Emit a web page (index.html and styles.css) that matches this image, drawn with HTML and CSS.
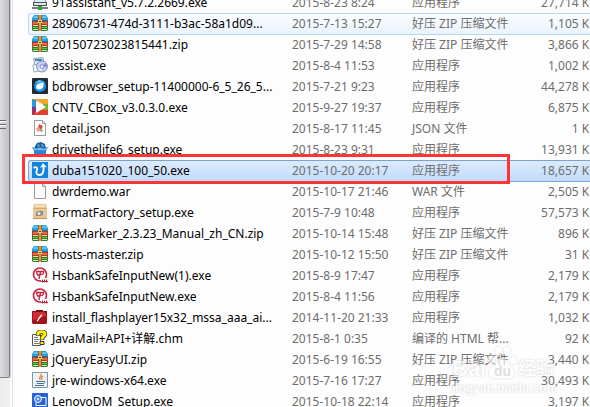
FILE: index.html
```
<!DOCTYPE html>
<html lang="zh-CN">
<head>
    <meta charset="UTF-8">
    <meta name="viewport" content="width=device-width, initial-scale=1.0">
    <title>Downloads</title>
    <link rel="stylesheet" href="styles.css">
</head>
<body>
    <!-- Shared icons -->
    <svg class="sprite" aria-hidden="true">
        <defs>
            <linearGradient id="cntvGrad" x2="0" y2="1"><stop offset="0" stop-color="#2374c9"/><stop offset=".5" stop-color="#6d3794"/><stop offset="1" stop-color="#d5204e"/></linearGradient>
        </defs>
        <symbol id="zip" viewBox="0 0 16 16">
            <path fill="#2aa3dc" d="M2 0h12l2 3v3H0V3z"/>
            <path fill="#5cc6ee" d="M2 1h12l1 2H1z"/>
            <path fill="#1673ab" d="M0 5h16v1H0z"/>
            <path fill="#b53a20" d="M0 6h16v5H0z"/>
            <path fill="#e56b47" d="M1 7h14v2H1z"/>
            <path fill="#f3d6a4" d="M1 10h14v1H1z"/>
            <path fill="#2c7f2b" d="M0 11h16v4l-1 1H1l-1-1z"/>
            <path fill="#6abe45" d="M1 12h14v1H1z"/>
            <path fill="#e5e3b5" d="M1 14h14v1H1z"/>
            <path fill="#8f5d28" d="M6 0h4v16H6z"/>
            <path fill="#d59a46" d="M7 0h2v16H7z"/>
            <path fill="#f0cf73" d="M6 5h4v3H6z"/>
            <path fill="#5a3210" d="M7 6h2v1H7z"/>
        </symbol>
        <symbol id="bank" viewBox="0 0 16 16">
            <circle cx="8" cy="7.500" r="6.500" fill="#fff" stroke="#c4213d" stroke-width="1.600"/>
            <path fill="none" stroke="#c4213d" stroke-width="1.300" d="M4 4.500h7.500c.5 2-1 3-3 3M8.500 4.500L7 12M4.500 5l1 3h2"/>
            <path fill="#fff" d="M9 11h7v5H9z"/>
            <path fill="none" stroke="#c4213d" d="M9 14.500h7M10.500 12.500v3M12.500 12.500v3M14.500 12.500v3"/>
        </symbol>
    </svg>

    <div class="window">
        <div class="nav-scroll">
            <div class="thumb"><span class="grip"></span></div>
        </div>

        <main class="list">
            <table class="files" aria-label="文件列表">
                <colgroup>
                    <col class="col-name">
                    <col class="col-date">
                    <col class="col-type">
                    <col class="col-size">
                </colgroup>
                <tbody>
                    <tr>
                        <td class="name"><svg class="icon" viewBox="0 0 16 16"><path fill="#9ba4ad" d="M2 1h12v8H2z"/><path fill="#d9eff8" d="M3 2h10v6H3z"/><path fill="#4a5158" d="M1 8h14v4H1z"/><path fill="#e2e5e8" d="M2 9h12v2H2z"/><path fill="#777f86" d="M0 13h16v2H0z"/><path fill="#28a63e" d="M6 12h4v4H6z"/></svg>91assistant_v5.7.2.2669.exe</td>
                        <td>2015-8-23 8:24</td><td>应用程序</td><td class="size">27,714 KB</td>
                    </tr>
                    <tr class="hover">
                        <td class="name"><svg class="icon"><use href="#zip"/></svg>28906731-474d-3111-b3ac-58a1d09...</td>
                        <td>2015-7-13 15:27</td><td>好压 ZIP 压缩文件</td><td class="size">1,105 KB</td>
                    </tr>
                    <tr>
                        <td class="name"><svg class="icon"><use href="#zip"/></svg>20150723023815441.zip</td>
                        <td>2015-7-29 14:58</td><td>好压 ZIP 压缩文件</td><td class="size">3,866 KB</td>
                    </tr>
                    <tr>
                        <td class="name"><svg class="icon" viewBox="0 0 16 16"><path fill="#d7e3ee" stroke="#93a7bb" d="M1.500 1.500L11 .5l2 11-9 2z"/><path fill="#3c7bc8" d="M3 2h7v2H3z"/><path fill="#4ba459" d="M4 2h2v2H4z"/><path fill="#fff" stroke="#97a6b5" d="M1 8l6-1v7l-5 1z"/><circle cx="10" cy="9.500" r="5.500" fill="#c5cdf2" stroke="#858fc4"/><path fill="#8d7be0" d="M10 9l4-3 1 4z"/><path fill="#e5f4ff" d="M10 9L6 13l4 1z"/><circle cx="10" cy="9.500" r="1.800" fill="#fff" stroke="#8188ab"/></svg>assist.exe</td>
                        <td>2015-8-4 11:53</td><td>应用程序</td><td class="size">1,002 KB</td>
                    </tr>
                    <tr>
                        <td class="name"><svg class="icon" viewBox="0 0 16 16"><rect width="16" height="16" rx="1" fill="#252b34"/><circle cx="8" cy="8" r="6" fill="#1792ed"/><path fill="#6ccaff" d="M3 5l4-3 6 3-5-1z"/><path fill="#fff" d="M11.500 4.500c.5 4-1 7-4 7s-4-2-3-4 3-2.500 7-3z"/></svg>bdbrowser_setup-11400000-6_5_26_5...</td>
                        <td>2015-7-21 9:23</td><td>应用程序</td><td class="size">44,278 KB</td>
                    </tr>
                    <tr>
                        <td class="name"><svg class="icon" viewBox="0 0 16 16"><path fill="url(#cntvGrad)" d="M0 0h5v16H0z"/><path fill="#f5a623" d="M0 0h16v8L5 2z"/><path fill="#2d9bd6" d="M0 0l5 3v5H0z"/><path fill="#e43d2e" d="M16 8v8H0l5-4z"/><path fill="#77b82a" d="M11 5h5v6h-5z"/><path fill="#fff" d="M4 2l10 6-10 6z"/></svg>CNTV_CBox_v3.0.3.0.exe</td>
                        <td>2015-9-27 19:37</td><td>应用程序</td><td class="size">6,875 KB</td>
                    </tr>
                    <tr>
                        <td class="name"><svg class="icon" viewBox="0 0 16 16"><path fill="#fff" stroke="#9b9b9b" d="M2.500.5h8l3 3v12h-11z"/><path fill="#e4e4e4" stroke="#9b9b9b" d="M10.500.5v3h3"/><path fill="#d7493b" d="M7 4l4 2-2 4-3-2z"/><path fill="#eba392" d="M4 8l3-1 2 4-4 1z"/><path fill="#79a961" d="M9 9l2 1-1 2-2-1z"/></svg>detail.json</td>
                        <td>2015-8-17 11:45</td><td>JSON 文件</td><td class="size">1 KB</td>
                    </tr>
                    <tr>
                        <td class="name"><svg class="icon" viewBox="0 0 16 16"><path fill="#1f5c9c" d="M3 8V5l2-3 4-1 4 2 1 5z"/><path fill="#5f9fd6" d="M5 5l1-2 2 1-1 2zM9 3l2 0 1 3h-2z"/><path fill="#2f86d4" d="M0 6l4 1 4-1 4 1 4-1-2 4v5H2v-5z"/><path fill="#7fc0f3" d="M1 7l3 1 4-1 4 1 3-1-1 2H2z"/></svg>drivethelife6_setup.exe</td>
                        <td>2015-8-23 9:31</td><td>应用程序</td><td class="size">13,931 KB</td>
                    </tr>
                    <tr class="selected">
                        <td class="name"><svg class="icon" viewBox="0 0 16 16"><path fill="#1185dc" d="M0 0h16v16H0z"/><path fill="none" stroke="#fff" stroke-width="1.800" d="M1.500 6C3.500 4.500 6 5 5 7.500S4 13 7.500 13 12 9 11.500 4"/><path fill="#fff" d="M11 1l4 4.500-3.500-1L8 6z"/></svg>duba151020_100_50.exe<span class="marker"></span></td>
                        <td>2015-10-20 20:17</td><td>应用程序</td><td class="size">18,657 KB</td>
                    </tr>
                    <tr>
                        <td class="name"><svg class="icon" viewBox="0 0 16 16"><path fill="#fafafa" stroke="#9b9b9b" d="M2.500.5h8l3 3v12h-11z"/><path fill="#e4e4e4" stroke="#9b9b9b" d="M10.500.5v3h3"/></svg>dwrdemo.war</td>
                        <td>2015-10-17 21:46</td><td>WAR 文件</td><td class="size">2,505 KB</td>
                    </tr>
                    <tr>
                        <td class="name"><svg class="icon" viewBox="0 0 16 16"><path fill="#e9c898" d="M2 0h12l1 5v10H1V5z"/><path fill="#d6ab72" d="M1 4h14v1H1z"/><path fill="#f4dfb9" d="M3 1h10v2H3z"/><path fill="#c49761" d="M1 14h14v1H1z"/><path fill="#8b8b8e" d="M4 8l3-1h4v4l-3 1H4z"/><circle cx="7" cy="9.500" r="1.500" fill="#e8e8ea"/></svg>FormatFactory_setup.exe</td>
                        <td>2015-7-9 10:48</td><td>应用程序</td><td class="size">57,573 KB</td>
                    </tr>
                    <tr>
                        <td class="name"><svg class="icon"><use href="#zip"/></svg>FreeMarker_2.3.23_Manual_zh_CN.zip</td>
                        <td>2015-10-14 15:48</td><td>好压 ZIP 压缩文件</td><td class="size">896 KB</td>
                    </tr>
                    <tr>
                        <td class="name"><svg class="icon"><use href="#zip"/></svg>hosts-master.zip</td>
                        <td>2015-10-12 15:50</td><td>好压 ZIP 压缩文件</td><td class="size">31 KB</td>
                    </tr>
                    <tr>
                        <td class="name"><svg class="icon"><use href="#bank"/></svg>HsbankSafeInputNew(1).exe</td>
                        <td>2015-8-9 17:47</td><td>应用程序</td><td class="size">2,179 KB</td>
                    </tr>
                    <tr>
                        <td class="name"><svg class="icon"><use href="#bank"/></svg>HsbankSafeInputNew.exe</td>
                        <td>2015-8-4 11:56</td><td>应用程序</td><td class="size">2,179 KB</td>
                    </tr>
                    <tr>
                        <td class="name"><svg class="icon" viewBox="0 0 16 16"><path fill="#a31218" d="M0 2h15v12l-1 1H1l-1-1z"/><path fill="#cf2e31" d="M1 3h13v4L1 11z"/><path fill="#7c1013" d="M4 1h7v2H4zM12 2h3l-1 3z"/><path fill="none" stroke="#fff" stroke-width="1.400" d="M5 12c2-1 2.500-5 5-6"/></svg>install_flashplayer15x32_mssa_aaa_ai...</td>
                        <td>2014-11-20 21:33</td><td>应用程序</td><td class="size">1,032 KB</td>
                    </tr>
                    <tr>
                        <td class="name"><svg class="icon" viewBox="0 0 16 16"><path fill="#fff" stroke="#555" d="M.5 4.500h8v11h-8z"/><path stroke="#777" d="M2 7.500h4M2 9.500h5M2 11.500h4M2 13.500h5"/><path fill="none" stroke="#333" stroke-width="4.500" d="M6 6V4c0-3 7-3 7 0 0 2-3 2-3 5v1"/><path fill="none" stroke="#fff100" stroke-width="3" d="M6 5.500V4c0-3 7-3 7 0 0 2-3 2-3 5v.5"/><path fill="#fff100" stroke="#333" d="M8 11.500h4v3H8z"/></svg>JavaMail+API+详解.chm</td>
                        <td>2015-8-1 0:35</td><td>编译的 HTML 帮...</td><td class="size">92 KB</td>
                    </tr>
                    <tr>
                        <td class="name"><svg class="icon"><use href="#zip"/></svg>jQueryEasyUI.zip</td>
                        <td>2015-6-19 16:55</td><td>好压 ZIP 压缩文件</td><td class="size">3,440 KB</td>
                    </tr>
                    <tr>
                        <td class="name"><svg class="icon" viewBox="0 0 16 16"><path fill="#edf2f6" stroke="#7c95ad" d="M.5.5h15v15H.5z"/><path fill="none" stroke="#e8822a" stroke-width="1.300" d="M9 2c1 2-3 3-1 6M11 4c-2 1-2 2-1 4"/><path fill="none" stroke="#4a7293" d="M4 9.500h7c3-1 2 2 0 2M5 11.500h6M3 13.500h9"/></svg>jre-windows-x64.exe</td>
                        <td>2015-7-16 17:27</td><td>应用程序</td><td class="size">30,493 KB</td>
                    </tr>
                    <tr>
                        <td class="name"><svg class="icon" viewBox="0 0 16 16"><rect width="16" height="16" rx="1" fill="#2762d9"/><path fill="none" stroke="#fff" d="M5 4.500h9v8H4v-3"/><circle cx="6" cy="6" r="3.500" fill="#4f8bf5" stroke="#fff"/><circle cx="6" cy="6" r="1" fill="#fff"/></svg>LenovoDM_Setup.exe</td>
                        <td>2015-10-18 22:14</td><td>应用程序</td><td class="size">3,197 KB</td>
                    </tr>
                </tbody>
            </table>
        </main>

        <div class="watermark">
            <div class="brand">
                <span class="bai">Bai</span>
                <span class="paw">
                    <svg viewBox="0 0 32 38"><ellipse cx="5" cy="16" rx="4" ry="5"/><ellipse cx="12" cy="6" rx="4" ry="5"/><ellipse cx="21" cy="6" rx="4" ry="5"/><ellipse cx="28" cy="16" rx="4" ry="5"/><path d="M16 14c5 0 5 5 10 9 6 5 4 13-3 13-4 0-9-1-14 0-8 1-10-8-4-13 5-4 5-9 11-9z"/></svg>
                    <span class="du">du</span>
                </span>
                <span class="jy">经验</span>
            </div>
            <div class="site">jingyan.baidu.com</div>
        </div>
    </div>
</body>
</html>
```
FILE: styles.css
```
* {
    box-sizing: border-box;
}
body {
    margin: 0;
    background-color: #fdfdfd;
    color: #000;
    font-family: "Noto Sans", "Noto Sans CJK SC", sans-serif;
    font-size: 12px;
}
.sprite {
    position: absolute;
    width: 0;
    height: 0;
}
.window {
    display: flex;
    position: relative;
    height: 100vh;
    overflow: hidden;
}

/* Scrollbar of the folder pane */
.nav-scroll {
    flex: none;
    width: 13px;
    padding-bottom: 29px;
    background: linear-gradient(to right, #ececee 0, #f0f0f0 10px, #fdfdfd 10px);
    border-right: 1px solid #d5e5f5;
}
.thumb {
    display: flex;
    align-items: center;
    width: 10px;
    height: 100%;
    background: linear-gradient(to right, #dedee1, #bfbfc5);
    border-right: 1px solid #858585;
    border-bottom: 1px solid #858585;
    border-bottom-right-radius: 2px;
    box-shadow: 1px 0 0 #c8c8c8;
}
.grip {
    width: 6px;
    height: 9px;
    margin-bottom: 128px;
    background: repeating-linear-gradient(#666 0, #666 1px, #fff 1px, #fff 2px, transparent 2px, transparent 4px);
}

/* File list, scrolled part way down */
.list {
    flex: 1;
    min-width: 0;
    margin-top: -8px;
    padding-left: 15px;
}
.files {
    width: calc(100% + 12px);
    table-layout: fixed;
    border-collapse: separate;
    border-spacing: 0;
}
.col-name {
    width: 264px;
}
.col-date {
    width: 120px;
}
.col-type {
    width: 108px;
}
.files td {
    height: 21px;
    padding: 0;
    line-height: 20px;
    color: #6d6d6d;
    white-space: nowrap;
    vertical-align: top;
    border-top: 1px solid transparent;
}
.files .name {
    position: relative;
    padding-left: 3px;
    color: #000;
    border-left: 1px solid transparent;
}
.files .size {
    padding-right: 5px;
    text-align: right;
}
.icon {
    width: 16px;
    height: 16px;
    margin-right: 4px;
    vertical-align: -3px;
}
.hover td {
    background: linear-gradient(#fafcfe, #ebf3fd);
    border-color: #b8d6fb;
    box-shadow: 0 1px 0 #b8d6fb;
}
.selected td {
    background: linear-gradient(#dcebfc, #c1dbfc);
    border-color: #7da2ce;
    box-shadow: 0 1px 0 #7da2ce;
}
.files .hover .name,
.files .selected .name {
    border-radius: 3px 0 0 3px;
}
.hover .name {
    border-left-color: #b8d6fb;
}
.selected .name {
    z-index: 1;
    border-left-color: #7da2ce;
}

/* Red frame round the chosen installer */
.marker {
    position: absolute;
    top: -7px;
    left: -7px;
    width: 488px;
    height: 30px;
    border: 3px solid #fe3437;
}

.watermark {
    position: absolute;
    right: 32px;
    bottom: 12px;
    width: 106px;
    color: #fff;
    font-family: "Liberation Sans", "Noto Sans CJK SC", sans-serif;
    font-weight: bold;
    text-shadow: 0 0 2px #aaa;
    opacity: 0.6;
}
.brand {
    display: flex;
    align-items: flex-end;
    height: 36px;
}
.bai {
    width: 34px;
    font-size: 22px;
    line-height: 24px;
}
.paw {
    position: relative;
    width: 32px;
    height: 36px;
}
.paw svg {
    width: 32px;
    height: 36px;
    fill: #fff;
    stroke: #ddd;
}
.du {
    position: absolute;
    left: 8px;
    bottom: 3px;
    color: #ccc;
    font-size: 14px;
    line-height: 14px;
    text-shadow: none;
}
.jy {
    font-size: 18px;
    line-height: 24px;
}
.site {
    font-size: 12px;
    line-height: 14px;
}
```
